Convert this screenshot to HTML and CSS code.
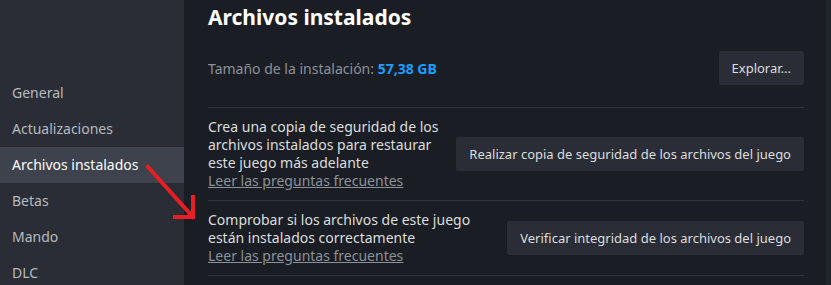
FILE: index.html
```html
<!DOCTYPE html>
<html lang="es">
<head>
  <meta charset="UTF-8">
  <meta name="viewport" content="width=device-width, initial-scale=1.0">
  <title>Propiedades - Archivos instalados</title>
  <link rel="stylesheet" href="styles.css">
</head>
<body>
  <div class="window">
    <nav class="sidebar">
      <div class="nav-item">General</div>
      <div class="nav-item">Actualizaciones</div>
      <div class="nav-item active">Archivos instalados</div>
      <div class="nav-item">Betas</div>
      <div class="nav-item">Mando</div>
      <div class="nav-item">DLC</div>
    </nav>

    <main class="content">
      <h1>Archivos instalados</h1>

      <div class="install-row">
        <div class="install-size">Tamaño de la instalación: <span class="size-value">57,38 GB</span></div>
        <button class="btn">Explorar...</button>
      </div>

      <div class="section">
        <div class="section-text">
          <div>Crea una copia de seguridad de los archivos instalados para restaurar este juego más adelante</div>
          <a class="faq-link" href="#">Leer las preguntas frecuentes</a>
        </div>
        <button class="btn">Realizar copia de seguridad de los archivos del juego</button>
      </div>

      <div class="section">
        <div class="section-text">
          <div>Comprobar si los archivos de este juego están instalados correctamente</div>
          <a class="faq-link" href="#">Leer las preguntas frecuentes</a>
        </div>
        <button class="btn">Verificar integridad de los archivos del juego</button>
      </div>
    </main>

    <div class="edge"></div>
  </div>

  <!-- red annotation arrow -->
  <svg class="arrow" width="60" height="70" viewBox="0 0 60 70">
    <path d="M8 12 L53 62 M53 42 L53 62 L35 62" fill="none" stroke="#ea1c24" stroke-width="4" stroke-linecap="square"/>
  </svg>
</body>
</html>
```

FILE: styles.css
```css
:root {
  --sidebar-bg: #2a2d35;
  --sidebar-active: #3d424c;
  --main-bg: #1a1d24;
  --btn-bg: #2a2d36;
  --line: #2e3139;
  --text: #dcdedf;
  --text-dim: #8b929a;
  --brand: #1a9fff;
}

html, body {
  margin: 0;
  height: 100%;
}

body {
  font-family: 'Noto Sans', 'Open Sans', sans-serif;
  font-size: 14px;
  color: var(--text);
  background-color: var(--main-bg);
  overflow: hidden;
  position: relative;
}

.window {
  display: flex;
  height: 285px;
}

.sidebar {
  width: 184px;
  flex: none;
  background-color: var(--sidebar-bg);
  padding-top: 75px;
  box-sizing: border-box;
}

.nav-item {
  height: 36px;
  line-height: 36px;
  padding-left: 12px;
  color: #b7bbbf;
  white-space: nowrap;
}

.nav-item.active {
  background-color: var(--sidebar-active);
  color: #ffffff;
}

.content {
  flex: 1;
  padding: 0 22px 0 24px;
  min-width: 0;
}

h1 {
  margin: 0;
  font-size: 21px;
  font-weight: 700;
  line-height: 34px;
  color: #ffffff;
}

.install-row {
  display: flex;
  align-items: center;
  justify-content: space-between;
  margin-top: 17px;
  padding-bottom: 22px;
  border-bottom: 1px solid var(--line);
}

.install-size {
  color: var(--text-dim);
}

.size-value {
  color: var(--brand);
  font-weight: 700;
}

.btn {
  flex: none;
  height: 34px;
  padding: 0 13px;
  border: none;
  border-radius: 2px;
  background-color: var(--btn-bg);
  color: var(--text);
  font-family: inherit;
  font-size: 13px;
  cursor: pointer;
}

.section {
  display: flex;
  align-items: center;
  gap: 10px;
  padding: 10px 0;
  border-bottom: 1px solid var(--line);
  line-height: 18px;
}

.section-text {
  flex: 1;
  min-width: 0;
}

.faq-link {
  color: var(--text-dim);
  text-decoration: underline;
}

.edge {
  width: 5px;
  flex: none;
  background-color: #1f232b;
}

.arrow {
  position: absolute;
  left: 140px;
  top: 155px;
}
```
